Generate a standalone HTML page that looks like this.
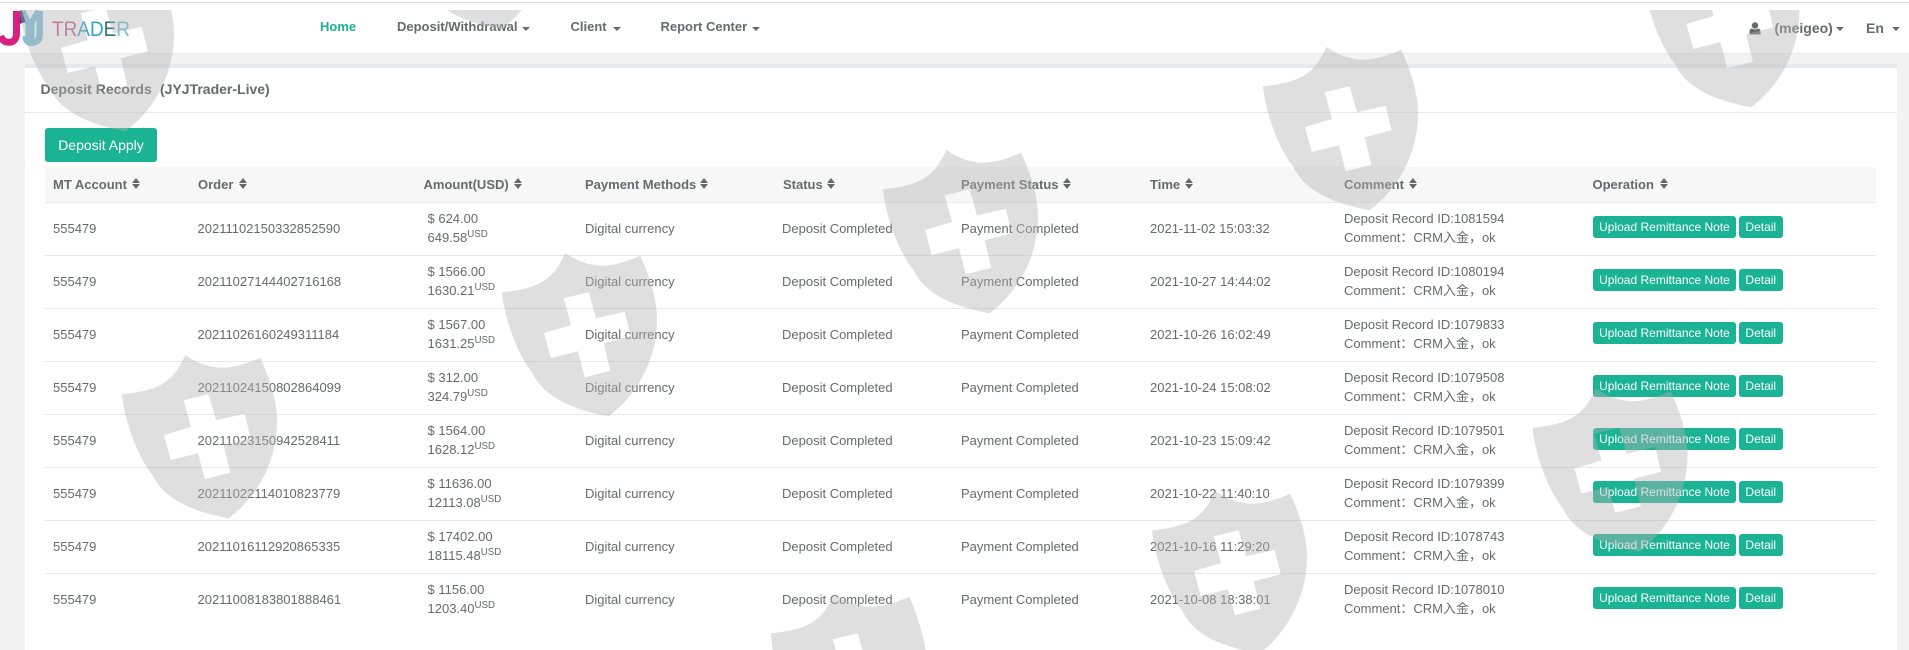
<!DOCTYPE html>
<html lang="en">
<head>
<meta charset="utf-8">
<title>Deposit Records</title>
<style>
*{box-sizing:border-box}
html,body{margin:0;padding:0;height:650px;overflow:hidden}
body{width:1909px;position:relative;background:#f3f3f4;font:13px/18.5px "Liberation Sans","Noto Sans CJK SC",sans-serif;color:#676a6c}
.abs,.nav a,.th,.c,.two,.btn,.caret,.sort{position:absolute}
#nav{position:absolute;left:0;top:0;width:1909px;height:54px;background:#fff;border-bottom:1px solid #e7eaec}
#topline{position:absolute;left:0;top:2px;width:1909px;height:1px;background:#dcdcdc}
.nav a{top:18px;font-weight:700;color:#676a6c;text-decoration:none;white-space:nowrap}
.nav a.big{font-size:14px;top:19px}
.caret{width:0;height:0;border-left:4px solid transparent;border-right:4px solid transparent;border-top:4px solid #676a6c;top:27px}
#panel{position:absolute;left:25px;top:64px;width:1872px;height:586px;background:#fff;border-top:4px solid #e7eaec}
#title{position:absolute;left:25px;top:68px;width:1872px;height:45px;border-bottom:1px solid #e7eaec}
#title b{position:absolute;top:12px;white-space:pre;font-size:14px}
#apply{position:absolute;left:45px;top:128px;width:112px;height:34px;background:#1ab394;border-radius:3px;color:#fff;font-size:14px;line-height:34px;text-align:center}
#head{position:absolute;left:45px;top:167px;width:1831px;height:36px;background:#f7f7f7;border-bottom:1px solid #e7eaec}
.th{top:176px;font-weight:700;white-space:nowrap}
.sort{top:178px;width:8px;height:11px}
.sort:before,.sort:after{content:"";position:absolute;left:0;width:0;height:0;border-left:4px solid transparent;border-right:4px solid transparent}
.sort:before{top:0;border-bottom:5px solid #676a6c}
.sort:after{top:6px;border-top:5px solid #676a6c}
.row{position:absolute;left:45px;width:1831px;height:53px}
.line{position:absolute;left:45px;width:1831px;height:1px;background:#e7e7e7}
.c{top:18px;white-space:nowrap}
.two{top:8px;white-space:nowrap;line-height:18.5px}
.two sup{font-size:9.75px;line-height:0;vertical-align:baseline;position:relative;top:-5px}
.btn{top:14px;height:22px;background:#1ab394;border-radius:3px;color:#fff;font-size:12px;line-height:22px;text-align:center;white-space:nowrap}
#wm{position:absolute;left:0;top:10px;pointer-events:none}
</style>
</head>
<body>
<div id="nav"></div>
<div id="topline"></div>

<svg class="abs" style="left:0;top:0" width="140" height="53" viewBox="0 0 140 53">
  <path d="M39.700 11V34Q39.700 42.700 31.500 42.700Q26 42.700 25.500 36" fill="none" stroke="#7fc1d6" stroke-width="6.500"/>
  <path d="M22.500 11L29.500 26M38.500 11L29.500 26" fill="none" stroke="#7fc1d6" stroke-width="6"/>
  <path d="M30 24V43" fill="none" stroke="#7fc1d6" stroke-width="9"/>
  <path d="M19 11L22.500 23" fill="none" stroke="#4b2a86" stroke-width="6"/>
  <path d="M16.500 11V33Q16.500 42.300 8.500 42.300Q3 42.300 0.500 36" fill="none" stroke="#d8207f" stroke-width="7"/>
  <text x="52" y="36" font-family="'Liberation Sans',sans-serif" font-size="21" textLength="78" lengthAdjust="spacingAndGlyphs"><tspan fill="#cf5590">T</tspan><tspan fill="#b8688f">R</tspan><tspan fill="#4aa2c8">A</tspan><tspan fill="#2fa5d0">D</tspan><tspan fill="#33707f">E</tspan><tspan fill="#6fc2d8">R</tspan></text>
</svg>

<div class="nav">
  <a style="left:320px;color:#1ab394">Home</a>
  <a style="left:397px">Deposit/Withdrawal</a><span class="caret" style="left:522px"></span>
  <a style="left:570.500px">Client</a><span class="caret" style="left:613px"></span>
  <a style="left:660.500px">Report Center</a><span class="caret" style="left:752px"></span>
  <svg class="abs" style="left:1749px;top:22px" width="12" height="13" viewBox="0 0 12 13"><circle cx="6" cy="3.500" r="3.200" fill="#676a6c"/><path d="M0.500 12.500V9.500Q0.500 6.800 3 6.500Q6 8.500 9 6.500Q11.500 6.800 11.500 9.500V12.500Z" fill="#676a6c"/></svg>
  <a class="big" style="left:1774.500px">(meigeo)</a><span class="caret" style="left:1835.500px"></span>
  <a class="big" style="left:1866px">En</a><span class="caret" style="left:1892px"></span>
</div>

<div id="panel"></div>
<div id="title"><b style="left:15.500px">Deposit Records</b><b style="left:135px">(JYJTrader-Live)</b></div>
<div id="apply">Deposit Apply</div>

<div id="head"></div>
<span class="th" style="left:53px">MT Account</span><i class="sort" style="left:132px"></i>
<span class="th" style="left:198px">Order</span><i class="sort" style="left:238.500px"></i>
<span class="th" style="left:423.500px">Amount(USD)</span><i class="sort" style="left:514px"></i>
<span class="th" style="left:585px">Payment Methods</span><i class="sort" style="left:700px"></i>
<span class="th" style="left:783px">Status</span><i class="sort" style="left:827px"></i>
<span class="th" style="left:961px">Payment Status</span><i class="sort" style="left:1063px"></i>
<span class="th" style="left:1150px">Time</span><i class="sort" style="left:1185px"></i>
<span class="th" style="left:1344px">Comment</span><i class="sort" style="left:1408.500px"></i>
<span class="th" style="left:1592.500px">Operation</span><i class="sort" style="left:1660px"></i>

<div class="row" style="top:202px">
  <span class="c" style="left:8px">555479</span><span class="c" style="left:152.500px">20211102150332852590</span>
  <div class="two" style="left:382.500px">$ 624.00<br>649.58<sup>USD</sup></div>
  <span class="c" style="left:540px">Digital currency</span><span class="c" style="left:737px">Deposit Completed</span><span class="c" style="left:916px">Payment Completed</span><span class="c" style="left:1105px">2021-11-02 15:03:32</span>
  <div class="two" style="left:1299px">Deposit Record ID:1081594<br>Comment：CRM入金，ok</div>
  <div class="btn" style="left:1548px;width:143px">Upload Remittance Note</div><div class="btn" style="left:1694px;width:43.500px">Detail</div>
</div>
<div class="line" style="top:255px"></div>
<div class="row" style="top:255px">
  <span class="c" style="left:8px">555479</span><span class="c" style="left:152.500px">20211027144402716168</span>
  <div class="two" style="left:382.500px">$ 1566.00<br>1630.21<sup>USD</sup></div>
  <span class="c" style="left:540px">Digital currency</span><span class="c" style="left:737px">Deposit Completed</span><span class="c" style="left:916px">Payment Completed</span><span class="c" style="left:1105px">2021-10-27 14:44:02</span>
  <div class="two" style="left:1299px">Deposit Record ID:1080194<br>Comment：CRM入金，ok</div>
  <div class="btn" style="left:1548px;width:143px">Upload Remittance Note</div><div class="btn" style="left:1694px;width:43.500px">Detail</div>
</div>
<div class="line" style="top:308px"></div>
<div class="row" style="top:308px">
  <span class="c" style="left:8px">555479</span><span class="c" style="left:152.500px">20211026160249311184</span>
  <div class="two" style="left:382.500px">$ 1567.00<br>1631.25<sup>USD</sup></div>
  <span class="c" style="left:540px">Digital currency</span><span class="c" style="left:737px">Deposit Completed</span><span class="c" style="left:916px">Payment Completed</span><span class="c" style="left:1105px">2021-10-26 16:02:49</span>
  <div class="two" style="left:1299px">Deposit Record ID:1079833<br>Comment：CRM入金，ok</div>
  <div class="btn" style="left:1548px;width:143px">Upload Remittance Note</div><div class="btn" style="left:1694px;width:43.500px">Detail</div>
</div>
<div class="line" style="top:361px"></div>
<div class="row" style="top:361px">
  <span class="c" style="left:8px">555479</span><span class="c" style="left:152.500px">20211024150802864099</span>
  <div class="two" style="left:382.500px">$ 312.00<br>324.79<sup>USD</sup></div>
  <span class="c" style="left:540px">Digital currency</span><span class="c" style="left:737px">Deposit Completed</span><span class="c" style="left:916px">Payment Completed</span><span class="c" style="left:1105px">2021-10-24 15:08:02</span>
  <div class="two" style="left:1299px">Deposit Record ID:1079508<br>Comment：CRM入金，ok</div>
  <div class="btn" style="left:1548px;width:143px">Upload Remittance Note</div><div class="btn" style="left:1694px;width:43.500px">Detail</div>
</div>
<div class="line" style="top:414px"></div>
<div class="row" style="top:414px">
  <span class="c" style="left:8px">555479</span><span class="c" style="left:152.500px">20211023150942528411</span>
  <div class="two" style="left:382.500px">$ 1564.00<br>1628.12<sup>USD</sup></div>
  <span class="c" style="left:540px">Digital currency</span><span class="c" style="left:737px">Deposit Completed</span><span class="c" style="left:916px">Payment Completed</span><span class="c" style="left:1105px">2021-10-23 15:09:42</span>
  <div class="two" style="left:1299px">Deposit Record ID:1079501<br>Comment：CRM入金，ok</div>
  <div class="btn" style="left:1548px;width:143px">Upload Remittance Note</div><div class="btn" style="left:1694px;width:43.500px">Detail</div>
</div>
<div class="line" style="top:467px"></div>
<div class="row" style="top:467px">
  <span class="c" style="left:8px">555479</span><span class="c" style="left:152.500px">20211022114010823779</span>
  <div class="two" style="left:382.500px">$ 11636.00<br>12113.08<sup>USD</sup></div>
  <span class="c" style="left:540px">Digital currency</span><span class="c" style="left:737px">Deposit Completed</span><span class="c" style="left:916px">Payment Completed</span><span class="c" style="left:1105px">2021-10-22 11:40:10</span>
  <div class="two" style="left:1299px">Deposit Record ID:1079399<br>Comment：CRM入金，ok</div>
  <div class="btn" style="left:1548px;width:143px">Upload Remittance Note</div><div class="btn" style="left:1694px;width:43.500px">Detail</div>
</div>
<div class="line" style="top:520px"></div>
<div class="row" style="top:520px">
  <span class="c" style="left:8px">555479</span><span class="c" style="left:152.500px">20211016112920865335</span>
  <div class="two" style="left:382.500px">$ 17402.00<br>18115.48<sup>USD</sup></div>
  <span class="c" style="left:540px">Digital currency</span><span class="c" style="left:737px">Deposit Completed</span><span class="c" style="left:916px">Payment Completed</span><span class="c" style="left:1105px">2021-10-16 11:29:20</span>
  <div class="two" style="left:1299px">Deposit Record ID:1078743<br>Comment：CRM入金，ok</div>
  <div class="btn" style="left:1548px;width:143px">Upload Remittance Note</div><div class="btn" style="left:1694px;width:43.500px">Detail</div>
</div>
<div class="line" style="top:573px"></div>
<div class="row" style="top:573px">
  <span class="c" style="left:8px">555479</span><span class="c" style="left:152.500px">20211008183801888461</span>
  <div class="two" style="left:382.500px">$ 1156.00<br>1203.40<sup>USD</sup></div>
  <span class="c" style="left:540px">Digital currency</span><span class="c" style="left:737px">Deposit Completed</span><span class="c" style="left:916px">Payment Completed</span><span class="c" style="left:1105px">2021-10-08 18:38:01</span>
  <div class="two" style="left:1299px">Deposit Record ID:1078010<br>Comment：CRM入金，ok</div>
  <div class="btn" style="left:1548px;width:143px">Upload Remittance Note</div><div class="btn" style="left:1694px;width:43.500px">Detail</div>
</div>

<svg id="wm" width="1909" height="640" viewBox="0 10 1909 640">
  <defs>
    <path id="sh" fill="#b2b2b2" fill-opacity=".42" fill-rule="evenodd" d="M63.300 0C75 8 88 12.700 100 12.700C113 12.700 126 8 138.300 2.700C147 22 155 45 155 66C155 105 137 140 106.700 163.300C72 157 42 145 30 119.300C18 105 3 70 0 39.300C22 37 37 33 47 24C55 17 59 9 63.300 0ZM61.700 45.300L86.700 39.300L94 65.300L122.700 58.700L128.700 83.300L101.700 90.300L108.300 117.700L82.700 124.300L76 98.300L48.700 105L42 80L69 72Z"/>
  </defs>
  <use href="#sh" x="19" y="-32"/>
  <use href="#sh" x="395" y="-134"/>
  <use href="#sh" x="1644.500" y="-56"/>
  <use href="#sh" x="1263" y="47"/>
  <use href="#sh" x="883" y="150"/>
  <use href="#sh" x="502" y="253"/>
  <use href="#sh" x="122" y="355"/>
  <use href="#sh" x="1532.500" y="388.500"/>
  <path transform="translate(1152 491)" fill="#b2b2b2" fill-opacity=".42" fill-rule="evenodd" d="M63.300 0C75 8 88 12.700 100 12.700C113 12.700 126 8 138.300 2.700C147 22 155 45 155 66C155 105 135 140 112 159L92 159C70 154 42 145 30 119.300C18 105 3 70 0 39.300C22 37 37 33 47 24C55 17 59 9 63.300 0ZM61.700 45.300L86.700 39.300L94 65.300L122.700 58.700L128.700 83.300L101.700 90.300L108.300 117.700L82.700 124.300L76 98.300L48.700 105L42 80L69 72Z"/>
  <path transform="translate(771 594)" fill="#b2b2b2" fill-opacity=".42" fill-rule="evenodd" d="M63.300 0C75 8 88 12.700 100 12.700C113 12.700 126 8 138.300 2.700C146 20 152 40 154.500 56L1.500 56C1 50 .5 45 0 39.300C22 37 37 33 47 24C55 17 59 9 63.300 0ZM61.700 45.300L86.700 39.300L91.400 56L64.600 56Z"/>
</svg>
</body>
</html>
